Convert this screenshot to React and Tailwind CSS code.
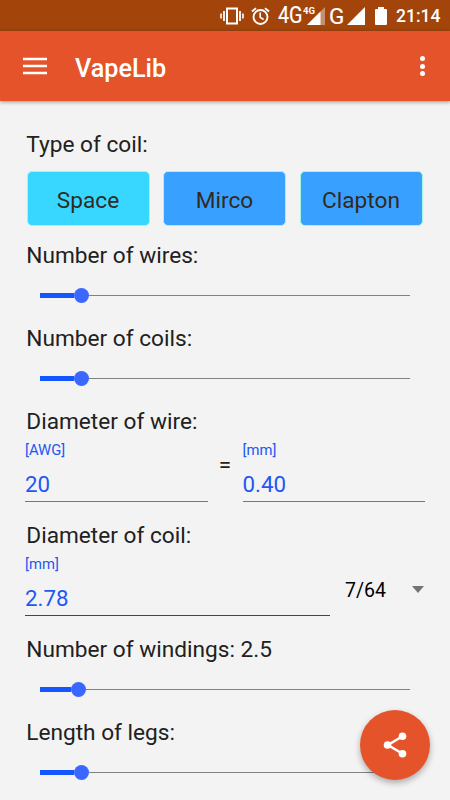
import React, { useState } from "react";

const coilTypes = ["Space", "Mirco", "Clapton"];

const StatusBar = () => (
  <div className="flex h-[31px] items-center bg-[#a3450b] pl-[220px] pt-px text-white">
    <svg width="24" height="18" viewBox="0 0 24 18" className="shrink-0">
      <rect x="7" y="1.5" width="10" height="15" fill="none" stroke="#fff" strokeWidth="2" />
      <path d="M4 4v10M20 4v10" stroke="#fff" strokeWidth="1.8" />
      <path d="M1 6.5v5M23 6.5v5" stroke="#fff" strokeWidth="1.6" />
    </svg>
    <svg width="19" height="19" viewBox="0 0 19 19" fill="none" stroke="#fff" className="ml-[7px] shrink-0">
      <circle cx="9.5" cy="10" r="7" strokeWidth="1.9" />
      <path d="M9.2 5.5v4.800l3.400 2.200" strokeWidth="1.6" />
      <path d="M1 4.500L5 1.100M18 4.500L14 1.100" strokeWidth="1.9" />
    </svg>
    <span className="ml-[8px] w-[24px] origin-left scale-x-[0.84] text-[23.500px] font-normal leading-none [-webkit-text-stroke:0.2px_white]">
      4G
    </span>
    <div className="relative h-[19px] w-[24px] shrink-0">
      <span className="absolute left-px top-[-1px] text-[9.500px] font-bold leading-none">4G</span>
      <svg width="24" height="19" viewBox="0 0 24 19" className="block">
        <path d="M23 0v18H5z" fill="#fff" fillOpacity="0.4" />
        <path d="M18.500 4.500v13.500H5z" fill="#fff" />
      </svg>
    </div>
    <span className="ml-[3px] w-[17px] text-[22.500px] leading-none [-webkit-text-stroke:0.2px_white]">G</span>
    <svg width="18" height="19" viewBox="0 0 18 19" className="ml-px shrink-0">
      <path d="M18 0v18H0z" fill="#fff" />
    </svg>
    <svg width="12" height="18" viewBox="0 0 12 18" className="ml-[10px] shrink-0">
      <path d="M3 0h6v2H11a1 1 0 0 1 1 1v14a1 1 0 0 1-1 1H1a1 1 0 0 1-1-1V3a1 1 0 0 1 1-1h2z" fill="#fff" />
    </svg>
    <span className="ml-[9px] mt-[2px] text-[17.500px] font-medium leading-none">21:14</span>
  </div>
);

const AppBar = () => (
  <header className="relative flex h-[70px] items-center bg-[#e5532b] pl-[23px] pr-[25px] text-white shadow-[0_1px_4px_rgba(0,0,0,0.4)]">
    <button aria-label="Menu">
      <svg width="24" height="18" viewBox="0 0 24 18" className="block">
        <path d="M0 2h24M0 9h24M0 16h24" stroke="#fff" strokeWidth="2.500" />
      </svg>
    </button>
    <h1 className="ml-[28px] mt-[6px] text-[25.200px] font-medium leading-[30px]">VapeLib</h1>
    <button className="ml-auto flex flex-col gap-[2.500px]" aria-label="More">
      <span className="size-[5px] rounded-full bg-white" />
      <span className="size-[5px] rounded-full bg-white" />
      <span className="size-[5px] rounded-full bg-white" />
    </button>
  </header>
);

const Label = ({ children }) => (
  <p className="pl-[26.300px] pt-[2px] text-[22.650px] leading-[28px] text-[#212121]">{children}</p>
);

// value is the filled length of the track in px
const Slider = ({ value }) => (
  <div className="mx-[40px] mb-[2px] flex h-[51px] items-center">
    <div className="h-[5px] bg-[#1456ff]" style={{ width: value - 7 }} />
    <div className="size-[15px] shrink-0 rounded-full bg-[#3a68ff]" />
    <div className="h-px flex-1 bg-[#828282]" />
  </div>
);

const Field = ({ unit, value, className }) => (
  <div className={`h-[66px] border-b text-[#1f57f5] ${className}`}>
    <div className="pt-[4px] text-[14.800px] leading-[20px]">{unit}</div>
    <div className="pt-[9px] text-[22.300px] leading-[30px]">{value}</div>
  </div>
);

const App = () => {
  const [type, setType] = useState("Space");

  return (
    <div className="relative h-[800px] w-[450px] overflow-hidden bg-[#f3f3f3] font-[Roboto,sans-serif]">
      <StatusBar />
      <AppBar />

      <main className="pt-[28px]">
        <Label>Type of coil:</Label>
        <div className="mb-[14px] mt-[12px] flex gap-[13.500px] pl-[26.500px]">
          {coilTypes.map((name) => (
            <button
              key={name}
              onClick={() => setType(name)}
              className={`h-[55px] w-[123px] rounded-[5px] border border-[#a4f6dc] pt-[4px] text-[22.650px] text-[#33291f] ${
                type === name ? "bg-[#38d7ff]" : "bg-[#38a1ff]"
              }`}
            >
              {name}
            </button>
          ))}
        </div>

        <Label>Number of wires:</Label>
        <Slider value={41} />
        <Label>Number of coils:</Label>
        <Slider value={41} />

        <Label>Diameter of wire:</Label>
        <div className="flex h-[84px] pl-[25px]">
          <Field unit="[AWG]" value="20" className="w-[182.500px] border-[#777]" />
          <span className="w-[35px] pt-[13px] text-center text-[22.500px] leading-[30px] text-[#212121]">=</span>
          <Field unit="[mm]" value="0.40" className="w-[182.500px] border-[#777]" />
        </div>

        <Label>Diameter of coil:</Label>
        <div className="flex h-[84px] pl-[25px]">
          <Field unit="[mm]" value="2.78" className="w-[305px] border-[#444]" />
          <div className="ml-[15px] mt-[26px] flex h-[30px] w-[79px] items-center justify-between">
            <span className="text-[19.500px] leading-[30px] text-black">7/64</span>
            <svg width="12" height="7" viewBox="0 0 12 7" className="mb-[4px]">
              <path d="M0 0h12L6 7z" fill="#737373" />
            </svg>
          </div>
        </div>

        <Label>Number of windings: 2.5</Label>
        <Slider value={38} />
        <Label>Length of legs:</Label>
        <Slider value={41} />
      </main>

      <button
        aria-label="Share"
        className="absolute left-[360px] top-[710px] flex size-[70px] items-center justify-center rounded-full bg-[#e5532b] shadow-[0_3px_6px_rgba(0,0,0,0.3)]"
      >
        <svg width="24" height="26" viewBox="0 0 24 26" fill="#fff">
          <path d="M19.500 4.300L5 13l14.500 8.700" fill="none" stroke="#fff" strokeWidth="2.500" />
          <circle cx="19.500" cy="4.300" r="3.800" />
          <circle cx="4.500" cy="13" r="3.800" />
          <circle cx="19.500" cy="21.700" r="3.800" />
        </svg>
      </button>
    </div>
  );
};

export default App;
